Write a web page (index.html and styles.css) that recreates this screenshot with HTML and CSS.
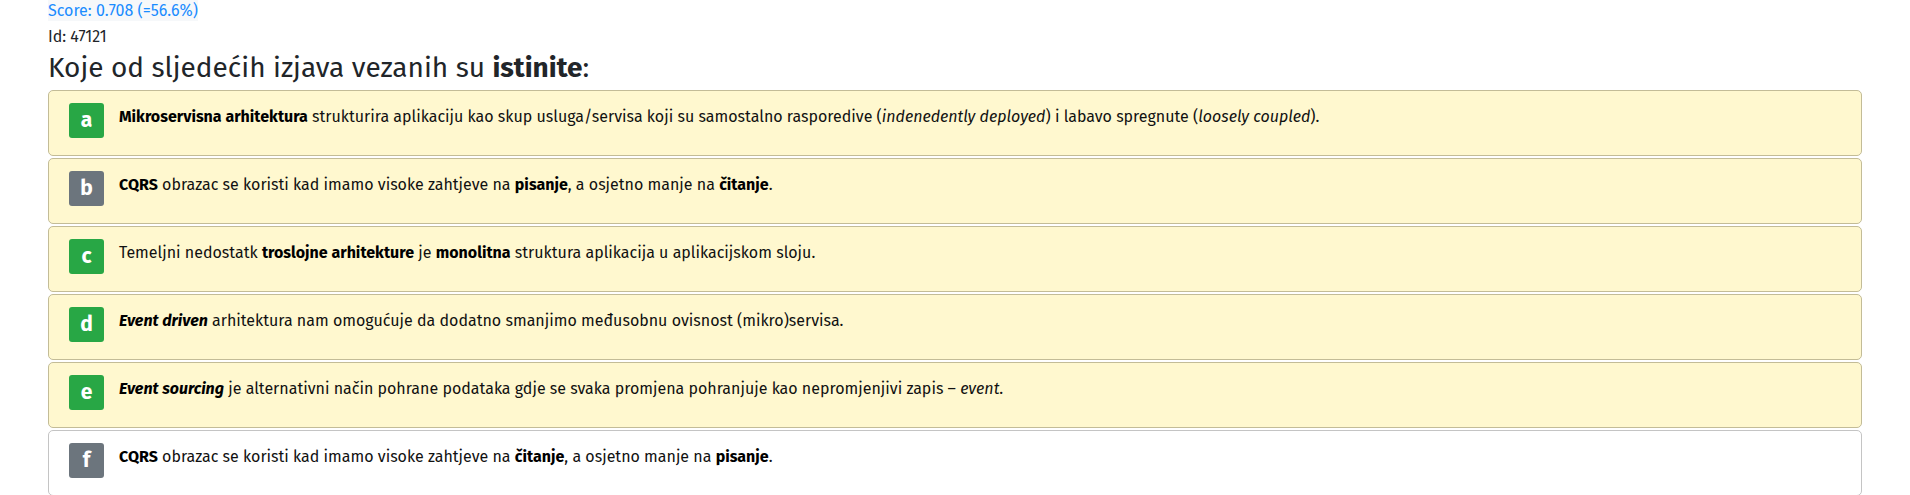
FILE: index.html
```html
<!DOCTYPE html>
<html lang="hr">
<head>
<meta charset="utf-8">
<title>Pitanje 47121</title>
<link rel="stylesheet" href="styles.css">
</head>
<body>
<div class="page">
  <div class="score">Score: 0.708 (=56.6%)</div>
  <div class="qid">Id: 47121</div>
  <h3 class="question">Koje od sljedećih izjava vezanih su <b>istinite</b>:</h3>
  <div class="answers">
    <div class="answer correct">
      <span class="badge ok">a</span>
      <div class="text"><b>Mikroservisna arhitektura</b> strukturira aplikaciju kao skup usluga/servisa koji su samostalno rasporedive (<i>indenedently deployed</i>) i labavo spregnute (<i>loosely coupled</i>).</div>
    </div>
    <div class="answer correct">
      <span class="badge off">b</span>
      <div class="text"><b>CQRS</b> obrazac se koristi kad imamo visoke zahtjeve na <b>pisanje</b>, a osjetno manje na <b>čitanje</b>.</div>
    </div>
    <div class="answer correct">
      <span class="badge ok">c</span>
      <div class="text">Temeljni nedostatk <b>troslojne arhitekture</b> je <b>monolitna</b> struktura aplikacija u aplikacijskom sloju.</div>
    </div>
    <div class="answer correct">
      <span class="badge ok">d</span>
      <div class="text"><b><i>Event driven</i></b> arhitektura nam omogućuje da dodatno smanjimo međusobnu ovisnost (mikro)servisa.</div>
    </div>
    <div class="answer correct">
      <span class="badge ok">e</span>
      <div class="text"><b><i>Event sourcing</i></b> je alternativni način pohrane podataka gdje se svaka promjena pohranjuje kao nepromjenjivi zapis – <i>event</i>.</div>
    </div>
    <div class="answer plain">
      <span class="badge off">f</span>
      <div class="text"><b>CQRS</b> obrazac se koristi kad imamo visoke zahtjeve na <b>čitanje</b>, a osjetno manje na <b>pisanje</b>.</div>
    </div>
  </div>
</div>
</body>
</html>
```

FILE: styles.css
```css
html, body {
  margin: 0;
  padding: 0;
  background: #fff;
}
body {
  font-family: "Fira Sans", Roboto, "Noto Sans", sans-serif;
  color: #212529;
}
.page {
  padding: 0 48px;
}
.score {
  display: inline-block;
  font-size: 16px;
  line-height: 21px;
  color: #1a8cff;
  background: #f6f8fa;
}
.qid {
  font-size: 16px;
  line-height: 22px;
  margin-top: 5px;
}
.question {
  margin: 0;
  font-size: 28px;
  font-weight: 400;
  line-height: 39px;
  color: #212529;
}
.question b {
  font-weight: 700;
}
.answers {
  margin-top: 3px;
  display: flex;
  flex-direction: column;
  gap: 2px;
}
.answer {
  display: flex;
  align-items: flex-start;
  gap: 15px;
  padding: 12px 20px 17px;
  border: 1px solid #c3bc97;
  border-radius: 5px;
  background: #fff8cf;
}
.answer.plain {
  background: #fff;
  border-color: #c4c4c4;
}
.badge {
  flex: none;
  width: 35px;
  height: 35px;
  border-radius: 3px;
  color: #fff;
  font-size: 21px;
  font-weight: 700;
  line-height: 35px;
  text-align: center;
}
.badge.ok {
  background: #28a745;
}
.badge.off {
  background: #6c757d;
}
.text {
  font-size: 16px;
  line-height: 24px;
  color: #111;
  padding-top: 2px;
}
.text b {
  font-weight: 700;
  color: #000;
}
```
